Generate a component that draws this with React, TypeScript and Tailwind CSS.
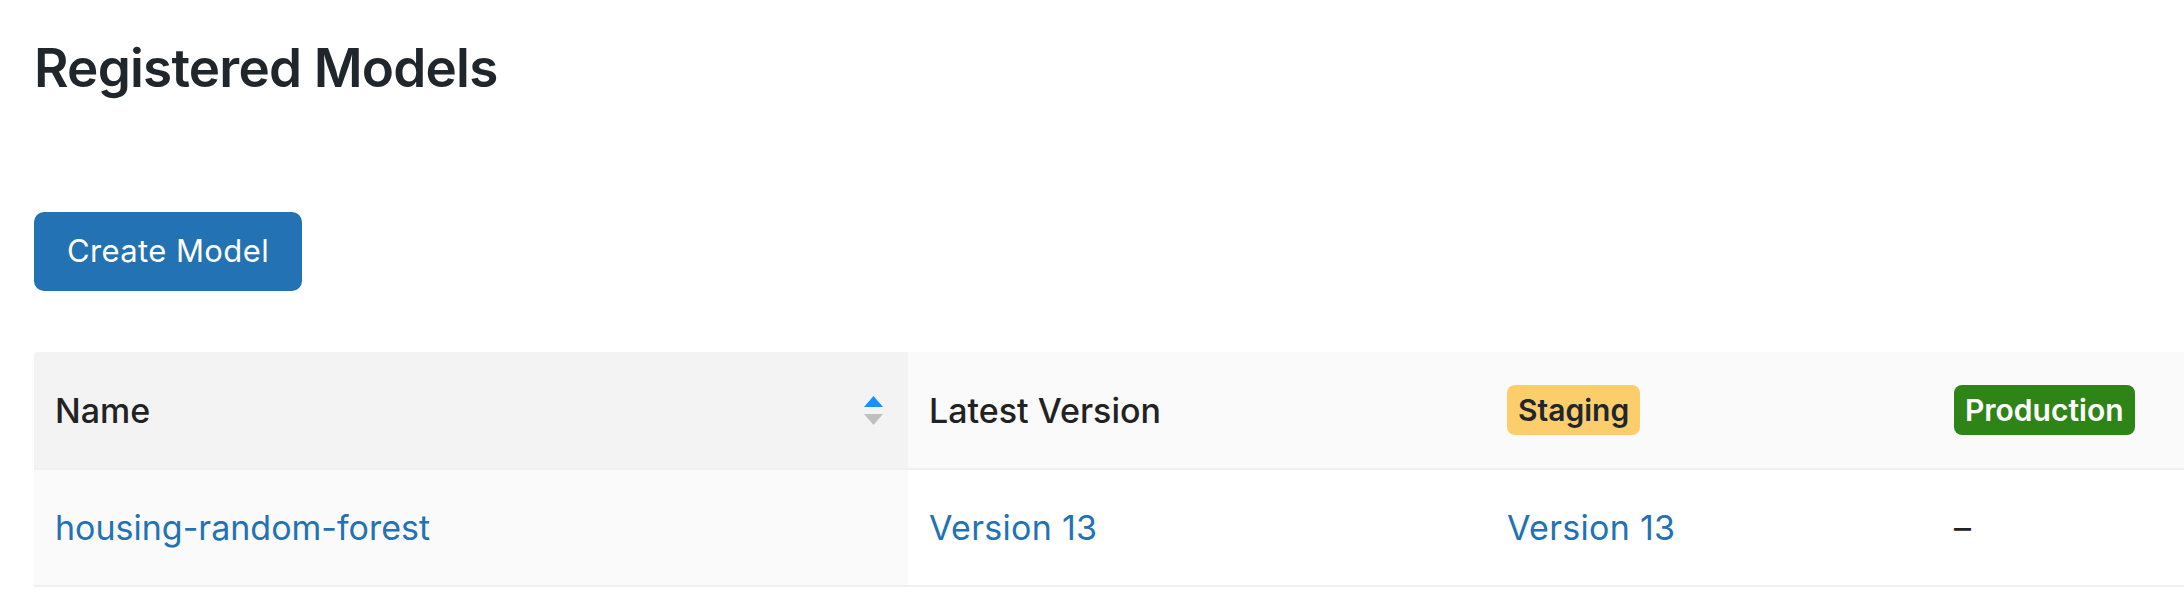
import React from "react";

function SortIcon() {
  return (
    <div className="flex flex-col gap-[7px]">
      <svg width="19" height="11" viewBox="0 0 19 11">
        <path d="M9.5 0 L19 11 H0 Z" fill="#1890ff" />
      </svg>
      <svg width="19" height="11" viewBox="0 0 19 11">
        <path d="M0 0 H19 L9.5 11 Z" fill="#bfbfbf" />
      </svg>
    </div>
  );
}

function Badge({ label, className }: { label: string; className: string }) {
  return (
    <span
      className={`inline-flex h-[50px] items-center rounded-[8px] px-[11px] text-[30px] font-semibold leading-none ${className}`}
    >
      {label}
    </span>
  );
}

export default function App() {
  return (
    <div className="min-h-[600px] w-full overflow-hidden bg-white pl-[34px] font-[Inter,sans-serif]">
      <h1 className="pt-[41px] text-[53px] font-semibold leading-[55px] tracking-[-0.8px] text-[#1f272d]">
        Registered Models
      </h1>

      <button className="mt-[116px] flex h-[79px] w-[268px] items-center justify-center rounded-[10px] bg-[#2272b4] text-[31px] tracking-[0.4px] text-white">
        Create Model
      </button>

      {/* Models table */}
      <div className="mt-[61px] grid grid-cols-[874px_578px_447px_1fr] text-[34px]">
        {/* header */}
        <div className="flex h-[118px] items-center justify-between rounded-tl-[3px] border-b-2 border-[#f0f0f0] bg-[#f3f3f3] pl-[21px] pr-[25px] font-medium text-[#222]">
          <span>Name</span>
          <SortIcon />
        </div>
        <div className="flex h-[118px] items-center border-b-2 border-[#f0f0f0] bg-[#fafafa] px-[21px] font-medium text-[#222]">
          Latest Version
        </div>
        <div className="flex h-[118px] items-center border-b-2 border-[#f0f0f0] bg-[#fafafa] px-[21px]">
          <Badge label="Staging" className="bg-[#fccd6b] text-[#1f272d]" />
        </div>
        <div className="flex h-[118px] items-center border-b-2 border-[#f0f0f0] bg-[#fafafa] px-[21px]">
          <Badge label="Production" className="bg-[#2f8418] text-white" />
        </div>

        {/* row */}
        <div className="flex h-[117px] items-center border-b-2 border-[#f0f0f0] bg-[#fafafa] px-[21px] text-[#2272b4]">
          housing-random-forest
        </div>
        <div className="flex h-[117px] items-center border-b-2 border-[#f0f0f0] bg-white px-[21px] tracking-[0.3px] text-[#2272b4]">
          Version 13
        </div>
        <div className="flex h-[117px] items-center border-b-2 border-[#f0f0f0] bg-white px-[21px] tracking-[0.3px] text-[#2272b4]">
          Version 13
        </div>
        <div className="flex h-[117px] items-center border-b-2 border-[#f0f0f0] bg-white px-[21px] text-[#222]">
          –
        </div>
      </div>
    </div>
  );
}
